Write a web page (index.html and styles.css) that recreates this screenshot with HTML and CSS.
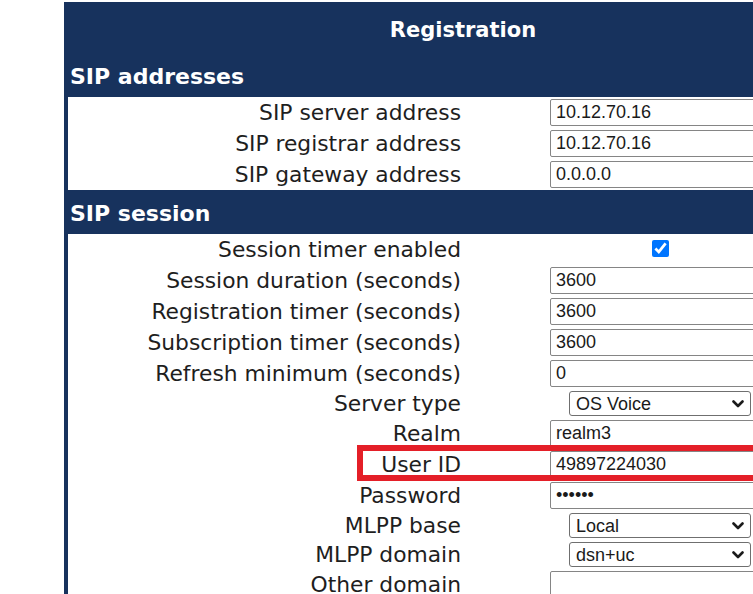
FILE: index.html
```html
<!DOCTYPE html>
<html lang="en">
<head>
<meta charset="utf-8">
<title>Registration</title>
<link rel="stylesheet" href="styles.css">
</head>
<body>
<div class="panel">
  <div class="title">Registration</div>
  <div class="section section-first">SIP addresses</div>
  <div class="rows">
    <div class="row"><span class="label">SIP server address</span><span class="value"><input class="field" type="text" value="10.12.70.16"></span></div>
    <div class="row"><span class="label">SIP registrar address</span><span class="value"><input class="field" type="text" value="10.12.70.16"></span></div>
    <div class="row"><span class="label">SIP gateway address</span><span class="value"><input class="field" type="text" value="0.0.0.0"></span></div>
  </div>
  <div class="section">SIP session</div>
  <div class="rows">
    <div class="row"><span class="label">Session timer enabled</span><span class="value center"><input class="check" type="checkbox" checked></span></div>
    <div class="row"><span class="label">Session duration (seconds)</span><span class="value"><input class="field" type="text" value="3600"></span></div>
    <div class="row"><span class="label">Registration timer (seconds)</span><span class="value"><input class="field" type="text" value="3600"></span></div>
    <div class="row"><span class="label">Subscription timer (seconds)</span><span class="value"><input class="field" type="text" value="3600"></span></div>
    <div class="row"><span class="label">Refresh minimum (seconds)</span><span class="value"><input class="field" type="text" value="0"></span></div>
    <div class="row row-select"><span class="label">Server type</span><span class="value center"><span class="select-wrap"><select class="choice"><option>OS Voice</option></select><svg class="chevron" viewBox="0 0 12 8" width="12" height="8"><path d="M1.5 1.5 L6 6 L10.5 1.5" fill="none" stroke="#1a1a1a" stroke-width="2.6" stroke-linecap="round" stroke-linejoin="round"/></svg></span></span></div>
    <div class="row"><span class="label">Realm</span><span class="value"><input class="field" type="text" value="realm3"></span></div>
    <div class="row row-marked"><span class="label">User ID</span><span class="value"><input class="field" type="text" value="49897224030"></span><span class="marker"></span></div>
    <div class="row"><span class="label">Password</span><span class="value"><input class="field" type="password" value="123456"></span></div>
    <div class="row row-select"><span class="label">MLPP base</span><span class="value center"><span class="select-wrap"><select class="choice"><option>Local</option></select><svg class="chevron" viewBox="0 0 12 8" width="12" height="8"><path d="M1.5 1.5 L6 6 L10.5 1.5" fill="none" stroke="#1a1a1a" stroke-width="2.6" stroke-linecap="round" stroke-linejoin="round"/></svg></span></span></div>
    <div class="row row-select"><span class="label">MLPP domain</span><span class="value center"><span class="select-wrap"><select class="choice"><option>dsn+uc</option></select><svg class="chevron" viewBox="0 0 12 8" width="12" height="8"><path d="M1.5 1.5 L6 6 L10.5 1.5" fill="none" stroke="#1a1a1a" stroke-width="2.6" stroke-linecap="round" stroke-linejoin="round"/></svg></span></span></div>
    <div class="row"><span class="label">Other domain</span><span class="value"><input class="field" type="text" value=""></span></div>
  </div>
</div>
</body>
</html>
```
FILE: styles.css
```css
html, body {
  margin: 0;
  padding: 0;
  overflow: hidden;
  background: #ffffff;
  height: 594px;
}

body {
  font-family: "DejaVu Sans", Verdana, sans-serif;
  color: #1e1e1e;
}

.panel {
  margin: 2px 0 0 64px;
  width: 798px;
  background: #17325d;
  padding: 0 4px 4px 4px;
  box-sizing: border-box;
}

.title {
  height: 54px;
  display: flex;
  align-items: center;
  justify-content: center;
  color: #ffffff;
  font-weight: bold;
  font-size: 21px;
  padding-top: 2px;
  box-sizing: border-box;
}

.section {
  height: 44px;
  display: flex;
  align-items: center;
  color: #ffffff;
  font-weight: bold;
  font-size: 22px;
  padding: 3px 0 0 2px;
  box-sizing: border-box;
}

.section-first {
  height: 41px;
  padding-top: 0;
}

.rows {
  background: #ffffff;
}

.row {
  position: relative;
  display: grid;
  grid-template-columns: 393px 220px;
  column-gap: 89px;
  align-items: center;
  height: 31px;
}

.row-select {
  height: 29px;
}

.label {
  text-align: right;
  font-size: 21.8px;
  line-height: 26px;
  white-space: nowrap;
}

.value {
  display: flex;
  align-items: center;
}

.center {
  justify-content: center;
}

.field {
  box-sizing: border-box;
  width: 220px;
  height: 27px;
  margin: 0;
  padding: 0 5px;
  border: 1px solid #858585;
  border-radius: 2px;
  font-family: "Liberation Sans", Arial, sans-serif;
  font-size: 18px;
  color: #1a1a1a;
  background: #ffffff;
}

.check {
  width: 17px;
  height: 17px;
  margin: 0 0 2px 0;
  accent-color: #0075ff;
}

.select-wrap {
  position: relative;
  display: block;
  width: 182px;
  height: 25px;
}

.choice {
  box-sizing: border-box;
  display: block;
  width: 182px;
  height: 25px;
  margin: 0;
  padding: 0 24px 0 6px;
  border: 1px solid #6f6f6f;
  border-radius: 3px;
  font-family: "Liberation Sans", Arial, sans-serif;
  font-size: 18px;
  color: #1a1a1a;
  background: #ffffff;
  appearance: none;
  -webkit-appearance: none;
}

.chevron {
  position: absolute;
  right: 7px;
  top: 9px;
  pointer-events: none;
}

.marker {
  position: absolute;
  left: 289px;
  top: -4px;
  width: 520px;
  height: 36px;
  box-sizing: border-box;
  border: 6px solid #e41f28;
  pointer-events: none;
}
```
